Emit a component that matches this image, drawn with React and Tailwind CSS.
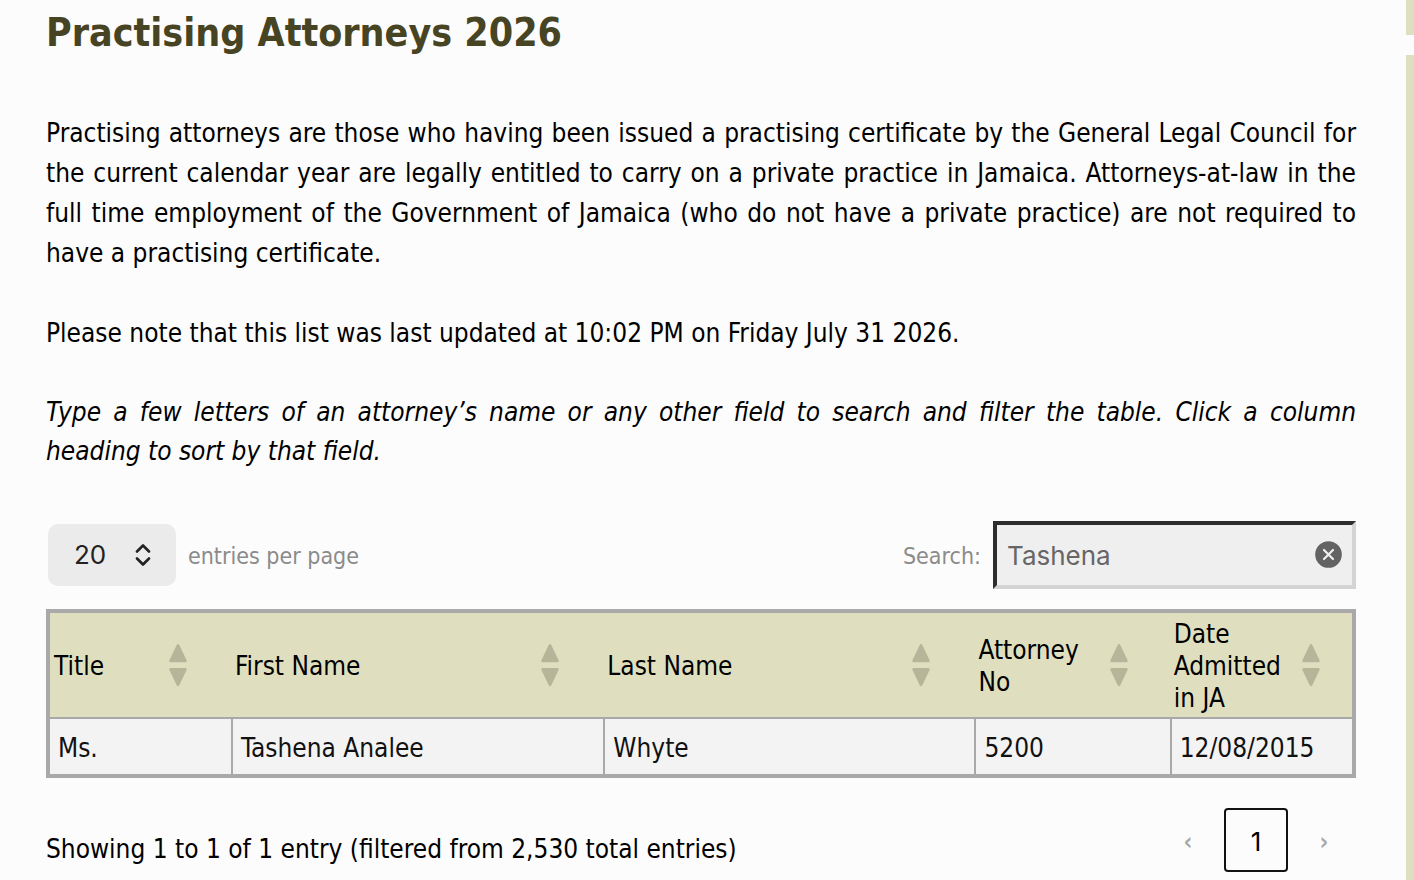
import React, { useState } from "react";

const columns = [
    { label: "Title", width: "w-[13.9%]", pad: "pr-11" },
    { label: "First Name", width: "w-[28.6%]", pad: "pr-11" },
    { label: "Last Name", width: "w-[28.5%]", pad: "pr-11" },
    { label: "Attorney No", width: "w-[15%]", pad: "pr-[42px]" },
    { label: "Date Admitted in JA", width: "w-[14%]", pad: "pr-8" },
];

const attorneys = [["Ms.", "Tashena Analee", "Whyte", "5200", "12/08/2015"]];

function SortIcon() {
    return (
        <svg
            width="18"
            height="44"
            viewBox="0 0 18 44"
            className="shrink-0 fill-[#b6b59a]"
            aria-hidden="true"
        >
            <path d="M7.7 1Q9 -.9 10.3 1L17.6 16.300Q18 18.300 16.5 18.300H1.500Q0 18.300 .4 16.300Z" />
            <path d="M.4 26Q0 24 1.500 24H16.5Q18 24 17.6 26L10.3 41.300Q9 43.200 7.700 41.300Z" />
        </svg>
    );
}

function Controls() {
    const [search, setSearch] = useState("Tashena");

    return (
        <div className="flex items-center justify-between text-[23px] text-[#8b8b8b]">
            <div className="ml-[2px] flex items-center gap-3">
                <div className="relative">
                    <select
                        id="length"
                        defaultValue="20"
                        className="h-[62px] w-32 appearance-none rounded-[10px] bg-[#ebebeb] pl-[26px] font-['Inter',sans-serif] text-[26px] text-[#222]"
                    >
                        <option>10</option>
                        <option>20</option>
                        <option>50</option>
                    </select>
                    <svg
                        width="16"
                        height="22"
                        viewBox="0 0 16 22"
                        className="pointer-events-none absolute top-5 right-[25px] fill-none stroke-[#222] stroke-[2.6]"
                        strokeLinecap="round"
                        strokeLinejoin="round"
                        aria-hidden="true"
                    >
                        <path d="M2 7.500L8 1.500L14 7.500M2 14.500L8 20.500L14 14.500" />
                    </svg>
                </div>
                <label htmlFor="length" className="pt-px">
                    entries per page
                </label>
            </div>
            <div className="flex items-center gap-3">
                <label htmlFor="search" className="pt-px">
                    Search:
                </label>
                <div className="relative">
                    <input
                        id="search"
                        type="text"
                        value={search}
                        onChange={(e) => setSearch(e.target.value)}
                        className="h-[68px] w-[363px] border-4 border-t-[#2d2d2d] border-r-[#d4d4d4] border-b-[#d4d4d4] border-l-[#2d2d2d] bg-[#efefef] pr-12 pl-[10px] font-['Inter',sans-serif] text-[26px] text-[#666]"
                    />
                    <button
                        type="button"
                        aria-label="Clear search"
                        onClick={() => setSearch("")}
                        className="absolute top-5 right-[14px]"
                    >
                        <svg width="27" height="27" viewBox="0 0 27 27">
                            <circle cx="13.5" cy="13.5" r="13.3" fill="#636363" />
                            <path
                                d="M9 9L18 18M18 9L9 18"
                                stroke="#efefef"
                                strokeWidth="2.2"
                                strokeLinecap="round"
                            />
                        </svg>
                    </button>
                </div>
            </div>
        </div>
    );
}

function AttorneyTable() {
    return (
        <table className="mt-5 w-full table-fixed border-separate border-spacing-0 border-4 border-[#a9a9a9]">
            <thead>
                <tr className="bg-[#dfdfbf]">
                    {columns.map((col) => (
                        <th
                            key={col.label}
                            scope="col"
                            className={`border-b-2 border-[#a9a9a9] pt-[5px] pb-[3px] pl-1 text-left font-normal ${col.width} ${col.pad}`}
                        >
                            <button
                                type="button"
                                className="flex w-full items-center justify-between text-left leading-8"
                            >
                                <span>{col.label}</span>
                                <SortIcon />
                            </button>
                        </th>
                    ))}
                </tr>
            </thead>
            <tbody>
                {attorneys.map((row) => (
                    <tr key={row[3]} className="bg-[#f3f3f3] text-[#111]">
                        {row.map((value) => (
                            <td
                                key={value}
                                className="border-l-2 border-[#a9a9a9] px-2 pt-[9px] pb-[6px] first:border-l-0"
                            >
                                {value}
                            </td>
                        ))}
                    </tr>
                ))}
            </tbody>
        </table>
    );
}

export default function App() {
    return (
        <div className="flex min-h-screen bg-[#fcfcfc] font-['DejaVu_Sans_Condensed','Noto_Sans',sans-serif] text-[26px] leading-10 text-black">
            <main className="min-w-0 flex-1 pt-[9px] pr-[50px] pl-[46px]">
                <h1 className="text-[39px] leading-12 font-bold text-[#474423]">
                    Practising Attorneys 2026
                </h1>
                <p className="mt-14 text-justify">
                    Practising attorneys are those who having been issued a
                    practising certificate by the General Legal Council for the
                    current calendar year are legally entitled to carry on a
                    private practice in Jamaica. Attorneys-at-law in the full
                    time employment of the Government of Jamaica (who do not
                    have a private practice) are not required to have a
                    practising certificate.
                </p>
                <p className="mt-10">
                    Please note that this list was last updated at 10:02 PM on
                    Friday July 31 2026.
                </p>
                <p className="mt-10 mb-[50px] text-justify leading-[39px] italic">
                    Type a few letters of an attorney’s name or any other field
                    to search and filter the table. Click a column heading to
                    sort by that field.
                </p>
                <Controls />
                <AttorneyTable />
                <div className="mt-[30px] flex items-center justify-between">
                    <p className="mt-[18px]">
                        Showing 1 to 1 of 1 entry (filtered from 2,530 total
                        entries)
                    </p>
                    <nav
                        aria-label="Pagination"
                        className="flex items-center gap-1 text-[#a8a8a8]"
                    >
                        <button type="button" aria-label="Previous" className="h-16 w-16 pt-1 text-2xl font-bold">
                            ‹
                        </button>
                        <button
                            type="button"
                            aria-current="page"
                            className="h-16 w-16 rounded-[4px] border-2 border-[#111] pt-1 font-['Inter',sans-serif] text-black"
                        >
                            1
                        </button>
                        <button type="button" aria-label="Next" className="h-16 w-16 pt-1 text-2xl font-bold">
                            ›
                        </button>
                    </nav>
                </div>
            </main>
            <aside className="flex w-2 flex-col gap-5">
                <div className="h-[35px] bg-[#dfdfbf]" />
                <div className="flex-1 bg-[#dfdfbf]" />
            </aside>
        </div>
    );
}
